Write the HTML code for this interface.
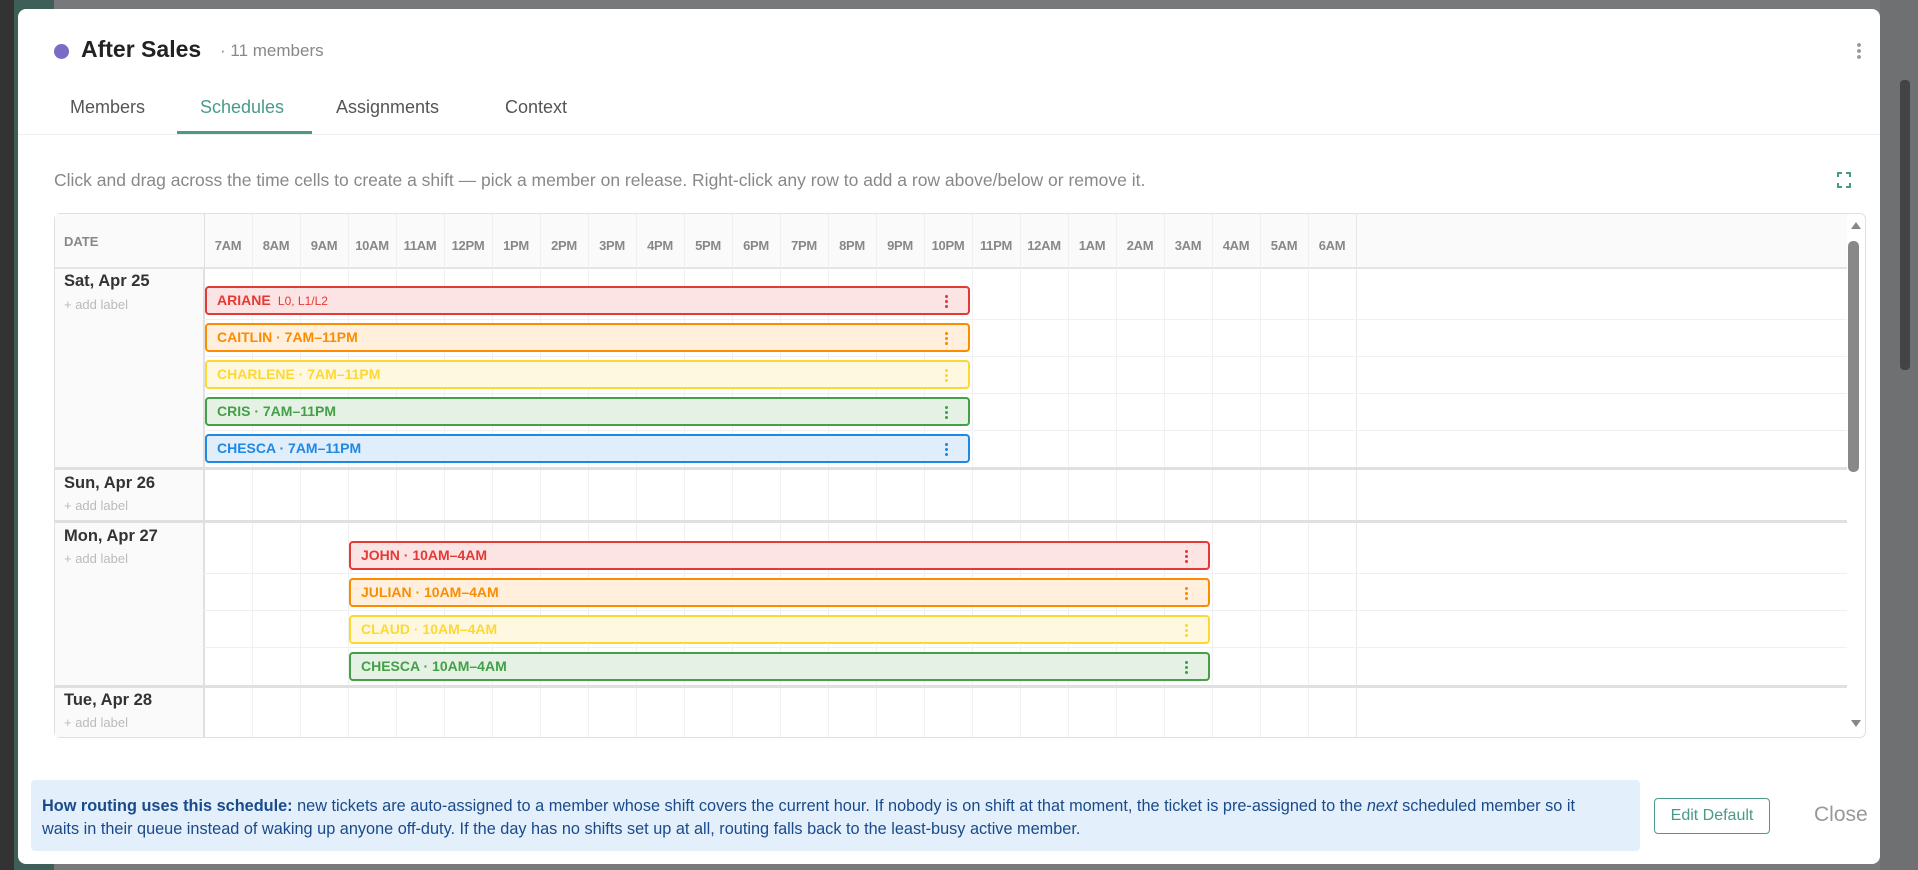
<!DOCTYPE html>
<html><head><meta charset="utf-8"><style>
*{box-sizing:border-box;margin:0;padding:0}
body{width:1918px;height:870px;overflow:hidden;background:#78797b;font-family:"Liberation Sans",sans-serif;position:relative}
.a{position:absolute}
.modal{left:18px;top:9px;width:1862px;height:855px;background:#fff;border-radius:8px}
.tab{position:absolute;top:97px;font-size:18px;color:#555}
.bar{position:absolute;height:29px;border:2px solid;border-radius:4px;font-weight:bold;font-size:14px;line-height:25px;padding-left:10px;white-space:nowrap}
.bar .d{position:absolute;right:20px;top:6px;width:3px;height:15px;background:radial-gradient(circle,currentColor 1.4px,transparent 1.6px) 0 0/3px 5px repeat-y}
.vl{position:absolute;width:1px;background:#f0f0f0}
.hl{position:absolute;left:204px;width:1643px;height:1px;background:#f0f0f0}
.sep{position:absolute;left:55px;width:1792px;height:3px;background:#e0e0e0}
.day{position:absolute;left:64px;font-weight:bold;font-size:16.5px;color:#333}
.lab{position:absolute;left:64px;font-size:13px;color:#bbb}
.hr{position:absolute;top:238px;font-size:13px;font-weight:bold;color:#888;width:48px;text-align:center;letter-spacing:-0.3px}
</style></head><body>
<div class="a" style="left:0;top:0;width:14px;height:870px;background:#333"></div>
<div class="a" style="left:14px;top:0;width:40px;height:870px;background:#3e5f58"></div>
<div class="a" style="left:1880px;top:0;width:38px;height:870px;background:#6f7072"></div>
<div class="a" style="left:1900px;top:80px;width:10px;height:290px;background:#444;border-radius:4px"></div>
<div class="a modal"></div>
<div class="a" style="left:54px;top:44px;width:15px;height:15px;border-radius:50%;background:#7b6bc4"></div>
<div class="a" style="left:81px;top:36px;font-size:23px;font-weight:bold;color:#222">After Sales</div>
<div class="a" style="left:220px;top:41px;font-size:17px;color:#888">· 11 members</div>
<div class="a" style="left:1857px;top:42px;width:4px;height:17px;background:radial-gradient(circle,#999 1.8px,transparent 2px) 0 0/4px 6px repeat-y"></div>
<div class="tab" style="left:70px">Members</div>
<div class="tab" style="left:200px;color:#4a9a8a">Schedules</div>
<div class="tab" style="left:336px">Assignments</div>
<div class="tab" style="left:505px">Context</div>
<div class="a" style="left:177px;top:131px;width:135px;height:3px;background:#4a9a8a"></div>
<div class="a" style="left:18px;top:134px;width:1862px;height:1px;background:#eee"></div>
<div class="a" style="left:54px;top:170px;font-size:17.5px;color:#888">Click and drag across the time cells to create a shift — pick a member on release. Right-click any row to add a row above/below or remove it.</div>
<svg class="a" style="left:1837px;top:172px" width="14" height="16" viewBox="0 0 14 16" fill="none" stroke="#4a9a8a" stroke-width="2"><path d="M1 5V1h4M9 1h4v4M13 11v4H9M5 15H1v-4"/></svg>
<div class="a" style="left:54px;top:213px;width:1812px;height:525px;border:1px solid #e0e0e0;border-radius:6px;overflow:hidden;background:#fff"></div>
<div class="a" style="left:55px;top:214px;width:1792px;height:55px;background:#fafafa;border-bottom:2px solid #e4e4e4"></div>
<div class="a" style="left:55px;top:269px;width:149px;height:468px;background:#fafafa;border-right:1px solid #e0e0e0"></div>
<div class="a" style="left:204px;top:214px;width:1px;height:523px;background:#e0e0e0"></div>
<div class="a" style="left:64px;top:234px;font-size:13px;font-weight:bold;color:#888">DATE</div>
<div id="grid"></div>
<div class="a" style="left:1851px;top:222px;width:0;height:0;border-left:5px solid transparent;border-right:5px solid transparent;border-bottom:7px solid #888"></div>
<div class="a" style="left:1848px;top:241px;width:11px;height:231px;border-radius:5px;background:#888"></div>
<div class="a" style="left:1851px;top:720px;width:0;height:0;border-left:5px solid transparent;border-right:5px solid transparent;border-top:7px solid #888"></div>

<div class="hl" style="top:319px"></div><div class="hl" style="top:356px"></div><div class="hl" style="top:393px"></div><div class="hl" style="top:430px"></div>
<div class="hl" style="top:573px"></div><div class="hl" style="top:610px"></div><div class="hl" style="top:647px"></div>
<div class="sep" style="top:467px"></div><div class="sep" style="top:520px"></div><div class="sep" style="top:685px"></div>

<div class="day" style="top:272px">Sat, Apr 25</div><div class="lab" style="top:297px">+ add label</div>
<div class="day" style="top:474px">Sun, Apr 26</div><div class="lab" style="top:498px">+ add label</div>
<div class="day" style="top:527px">Mon, Apr 27</div><div class="lab" style="top:551px">+ add label</div>
<div class="day" style="top:691px">Tue, Apr 28</div><div class="lab" style="top:715px">+ add label</div>

<div class="bar" style="left:205px;top:286px;width:765px;border-color:#e53935;background:#fde4e4;color:#e53935">ARIANE <span style="font-weight:normal;font-size:12px">&nbsp;L0, L1/L2</span><span class="d"></span></div>
<div class="bar" style="left:205px;top:323px;width:765px;border-color:#fb8c00;background:#ffefdc;color:#fb8c00">CAITLIN · 7AM–11PM<span class="d"></span></div>
<div class="bar" style="left:205px;top:360px;width:765px;border-color:#fdd835;background:#fff8e1;color:#fdd835">CHARLENE · 7AM–11PM<span class="d"></span></div>
<div class="bar" style="left:205px;top:397px;width:765px;border-color:#43a047;background:#e5f1e4;color:#43a047">CRIS · 7AM–11PM<span class="d"></span></div>
<div class="bar" style="left:205px;top:434px;width:765px;border-color:#1e88e5;background:#e0eefb;color:#1e88e5">CHESCA · 7AM–11PM<span class="d"></span></div>

<div class="bar" style="left:349px;top:541px;width:861px;border-color:#e53935;background:#fde4e4;color:#e53935">JOHN · 10AM–4AM<span class="d"></span></div>
<div class="bar" style="left:349px;top:578px;width:861px;border-color:#fb8c00;background:#ffefdc;color:#fb8c00">JULIAN · 10AM–4AM<span class="d"></span></div>
<div class="bar" style="left:349px;top:615px;width:861px;border-color:#fdd835;background:#fff8e1;color:#fdd835">CLAUD · 10AM–4AM<span class="d"></span></div>
<div class="bar" style="left:349px;top:652px;width:861px;border-color:#43a047;background:#e5f1e4;color:#43a047">CHESCA · 10AM–4AM<span class="d"></span></div>

<div class="a" style="left:31px;top:780px;width:1609px;height:71px;background:#e3f0fb;border-radius:4px"></div>
<div class="a" style="left:42px;top:795px;width:1568px;font-size:16.3px;line-height:23px;color:#1a4a8a">
<b>How routing uses this schedule:</b> new tickets are auto-assigned to a member whose shift covers the current hour. If nobody is on shift at that moment, the ticket is pre-assigned to the <i>next</i> scheduled member so it waits in their queue instead of waking up anyone off-duty. If the day has no shifts set up at all, routing falls back to the least-busy active member.</div>
<div class="a" style="left:1654px;top:798px;width:116px;height:36px;border:1px solid #4a9a8a;border-radius:4px;color:#4a9a8a;font-size:16px;text-align:center;line-height:34px">Edit Default</div>
<div class="a" style="left:1814px;top:803px;font-size:21px;color:#999">Close</div>

<script>
var h=["7AM","8AM","9AM","10AM","11AM","12PM","1PM","2PM","3PM","4PM","5PM","6PM","7PM","8PM","9PM","10PM","11PM","12AM","1AM","2AM","3AM","4AM","5AM","6AM"],s="";
for(var i=0;i<24;i++){var x=204+i*48;s+='<div class="hr" style="left:'+x+'px">'+h[i]+'</div>';s+='<div class="vl" style="left:'+(x+48)+'px;top:214px;height:523px;'+(i<23?'':'background:#e8e8e8')+'"></div>';}
document.getElementById('grid').innerHTML=s;
</script>
</body></html>
